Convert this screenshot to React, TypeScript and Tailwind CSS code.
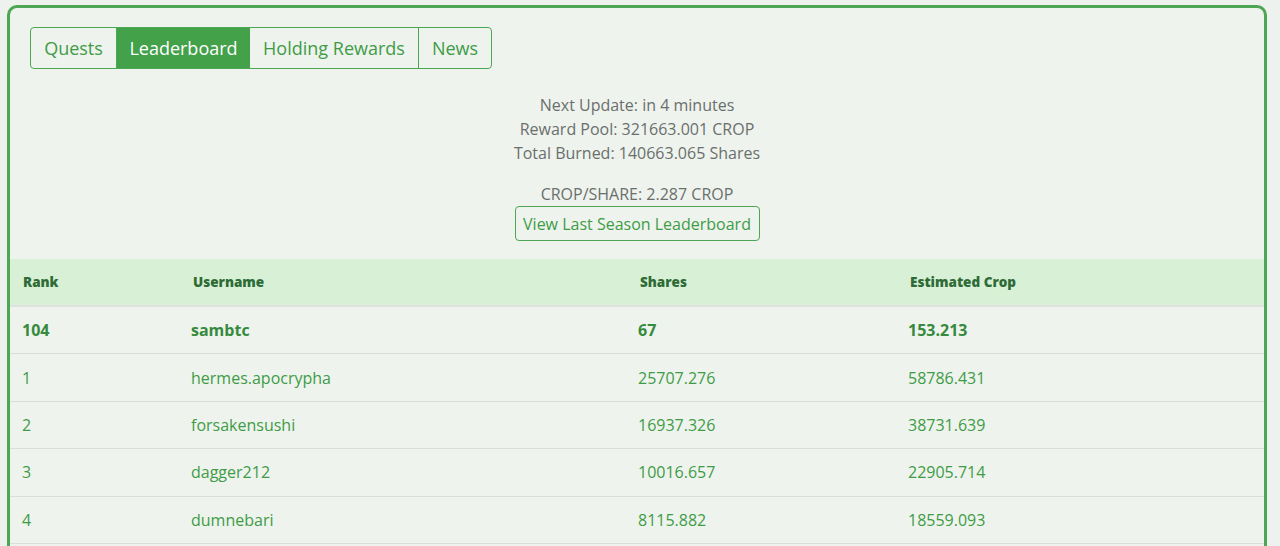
import React from "react";

const rows = [
  { rank: "104", user: "sambtc", shares: "67", crop: "153.213", bold: true },
  { rank: "1", user: "hermes.apocrypha", shares: "25707.276", crop: "58786.431" },
  { rank: "2", user: "forsakensushi", shares: "16937.326", crop: "38731.639" },
  { rank: "3", user: "dagger212", shares: "10016.657", crop: "22905.714" },
  { rank: "4", user: "dumnebari", shares: "8115.882", crop: "18559.093" },
];

export default function App() {
  return (
    <div
      className="min-h-[546px] w-[1280px] bg-[#eef2ee] pt-[5px] pl-[7px] overflow-hidden"
      style={{ fontFamily: '"Open Sans", "Noto Sans", sans-serif' }}
    >
      <div className="w-[1260px] h-[560px] rounded-[10px] border-[3px] border-[#4ea553] bg-[#eef3ee] overflow-hidden">
        <div className="pt-[19px] pl-[20px] flex">
          <div className="flex h-[42px] rounded-[4px] border border-[#4ea553] overflow-hidden text-[18px] text-[#3f9c46]">
            <div className="w-[86px] flex items-center justify-center border-r border-[#4ea553]">Quests</div>
            <div className="w-[133px] flex items-center justify-center bg-[#43a14a] text-white">Leaderboard</div>
            <div className="w-[169px] flex items-center justify-center border-r border-[#4ea553]">Holding Rewards</div>
            <div className="w-[72px] flex items-center justify-center">News</div>
          </div>
        </div>
        <div className="mt-[24px] flex flex-col items-center text-[16px] leading-[24px] text-[#6b6f6c]">
          <div>Next Update: in 4 minutes</div>
          <div>Reward Pool: 321663.001 CROP</div>
          <div>Total Burned: 140663.065 Shares</div>
          <div className="mt-[17px]">CROP/SHARE: 2.287 CROP</div>
          <div className="h-[35px] w-[245px] flex items-center justify-center rounded-[4px] border border-[#4ea553] text-[#3f9c46]">
            View Last Season Leaderboard
          </div>
        </div>
        <div className="mt-[18px]">
          <div className="flex h-[48px] items-center bg-[#d8f1d6] border-b-2 border-[#dfe3df] text-[13.5px] font-extrabold text-[#2f6b37]">
            <div className="w-[170px] pl-[13px]">Rank</div>
            <div className="w-[447px] pl-[13px]">Username</div>
            <div className="w-[270px] pl-[13px]">Shares</div>
            <div className="flex-1 pl-[13px]">Estimated Crop</div>
          </div>
          {rows.map((r) => (
            <div
              key={r.rank}
              className={`flex h-[47.4px] items-center border-b border-[#dadfda] text-[16px] ${r.bold ? "font-bold text-[#358a3d]" : "text-[#3f9c46]"}`}
            >
              <div className="w-[170px] pl-[12px]">{r.rank}</div>
              <div className="w-[447px] pl-[11px]">{r.user}</div>
              <div className="w-[270px] pl-[11px]">{r.shares}</div>
              <div className="flex-1 pl-[11px]">{r.crop}</div>
            </div>
          ))}
        </div>
      </div>
    </div>
  );
}
